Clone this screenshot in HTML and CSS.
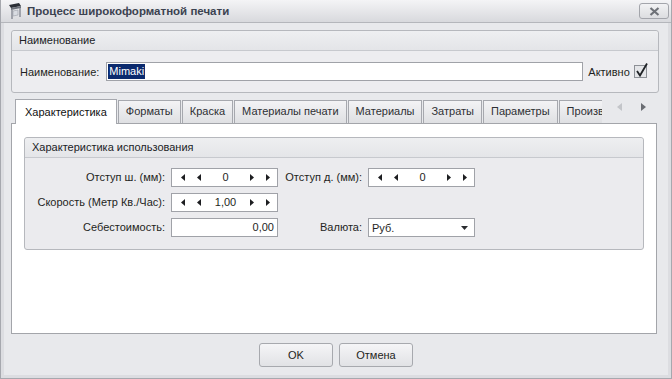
FILE: index.html
```html
<!DOCTYPE html>
<html lang="ru">
<head>
    <meta charset="UTF-8">
    <meta name="viewport" content="width=device-width, initial-scale=1.0">
    <title>Процесс широкоформатной печати</title>
    <link rel="stylesheet" href="styles.css">
</head>
<body>

    <div class="window">
        <div class="titlebar">
            <svg class="title-icon" width="18" height="18" viewBox="0 0 18 18">
                <path d="M3 3 L13 1 L15 4 L5 6 Z" fill="#2b2f36"/>
                <path d="M5 6 L15 4 L15 6 L5 8 Z" fill="#6b7079"/>
                <path d="M6 8 L6 17 M14 6 L14 15" stroke="#8a8f98" stroke-width="1.5"/>
                <path d="M7 9 L12 8 L12 13 L7 14 Z" fill="#d9dce2" stroke="#9aa0a8" stroke-width="0.6"/>
            </svg>
            <span class="title-text">Процесс широкоформатной печати</span>
            <div class="close-btn">
                <svg width="11" height="9" viewBox="0 0 11 9">
                    <path d="M1.5 1 L9.5 8 M9.5 1 L1.5 8" stroke="#6f7278" stroke-width="2.2"/>
                </svg>
            </div>
        </div>

        <div class="content">
            <div class="group name-group">
                <div class="group-head">Наименование</div>
                <div class="name-row">
                    <span class="label">Наименование:</span>
                    <div class="input name-input"><span class="selected">Mimaki</span></div>
                    <span class="label active-label">Активно</span>
                    <svg class="checkbox" width="15" height="16" viewBox="0 0 15 16">
                        <rect x="0.5" y="2.5" width="12" height="12" fill="#e4e5e8" stroke="#8d9096"/>
                        <path d="M3 8 L6 12.5 L13 0.5" fill="none" stroke="#1f2226" stroke-width="1.8"/>
                    </svg>
                </div>
            </div>

            <div class="tab-strip">
                <div class="tab-list">
                    <div class="tab active">Характеристика</div>
                    <div class="tab">Форматы</div>
                    <div class="tab">Краска</div>
                    <div class="tab">Материалы печати</div>
                    <div class="tab">Материалы</div>
                    <div class="tab">Затраты</div>
                    <div class="tab">Параметры</div>
                    <div class="tab">Производство</div>
                </div>
                <div class="tab-nav">
                    <svg width="5" height="8" viewBox="0 0 5 8"><path d="M5 0 L0 4 L5 8 Z" fill="#c3c5c9"/></svg>
                    <svg width="5" height="8" viewBox="0 0 5 8"><path d="M0 0 L5 4 L0 8 Z" fill="#6a6d73"/></svg>
                </div>
            </div>

            <div class="tab-panel">
                <div class="group usage-group">
                    <div class="group-head">Характеристика использования</div>
                    <div class="form-grid">
                        <span class="label">Отступ ш. (мм):</span>
                        <div class="input spin">
                            <svg width="4" height="7" viewBox="0 0 4 7"><path d="M4 0 L0 3.5 L4 7 Z"/></svg>
                            <svg width="4" height="7" viewBox="0 0 4 7"><path d="M4 0 L0 3.5 L4 7 Z"/></svg>
                            <span class="spin-value">0</span>
                            <svg width="4" height="7" viewBox="0 0 4 7"><path d="M0 0 L4 3.5 L0 7 Z"/></svg>
                            <svg width="4" height="7" viewBox="0 0 4 7"><path d="M0 0 L4 3.5 L0 7 Z"/></svg>
                        </div>
                        <span class="label">Отступ д. (мм):</span>
                        <div class="input spin">
                            <svg width="4" height="7" viewBox="0 0 4 7"><path d="M4 0 L0 3.5 L4 7 Z"/></svg>
                            <svg width="4" height="7" viewBox="0 0 4 7"><path d="M4 0 L0 3.5 L4 7 Z"/></svg>
                            <span class="spin-value">0</span>
                            <svg width="4" height="7" viewBox="0 0 4 7"><path d="M0 0 L4 3.5 L0 7 Z"/></svg>
                            <svg width="4" height="7" viewBox="0 0 4 7"><path d="M0 0 L4 3.5 L0 7 Z"/></svg>
                        </div>

                        <span class="label">Скорость (Метр Кв./Час):</span>
                        <div class="input spin">
                            <svg width="4" height="7" viewBox="0 0 4 7"><path d="M4 0 L0 3.5 L4 7 Z"/></svg>
                            <svg width="4" height="7" viewBox="0 0 4 7"><path d="M4 0 L0 3.5 L4 7 Z"/></svg>
                            <span class="spin-value">1,00</span>
                            <svg width="4" height="7" viewBox="0 0 4 7"><path d="M0 0 L4 3.5 L0 7 Z"/></svg>
                            <svg width="4" height="7" viewBox="0 0 4 7"><path d="M0 0 L4 3.5 L0 7 Z"/></svg>
                        </div>
                        <span></span>
                        <span></span>

                        <span class="label">Себестоимость:</span>
                        <div class="input number">0,00</div>
                        <span class="label">Валюта:</span>
                        <div class="input select">
                            <span>Руб.</span>
                            <svg width="7" height="4" viewBox="0 0 7 4"><path d="M0 0 L7 0 L3.5 4 Z" fill="#2a2c30"/></svg>
                        </div>
                    </div>
                </div>
            </div>
        </div>

        <div class="footer">
            <div class="button">OK</div>
            <div class="button">Отмена</div>
        </div>
    </div>

</body>
</html>
```

FILE: styles.css
```css
body {
    margin: 0;
    font-family: 'Liberation Sans', Arial, sans-serif;
    font-size: 11px;
    color: #1e1f22;
    background-color: #e8e9ec;
}
.window {
    width: 672px;
    height: 379px;
    box-sizing: border-box;
    background-color: #e8e9ec;
    border: 1px solid #a6a8ae;
    border-top: none;
    box-shadow: inset 3px 0 0 #dcdde1, inset -3px 0 0 #dcdde1, inset 0 -3px 0 #dcdde1;
    display: flex;
    flex-direction: column;
}
.titlebar {
    height: 22px;
    border-bottom: 1px solid #b4b6bb;
    background: linear-gradient(#f4f4f6, #d8d9dd);
    display: flex;
    align-items: center;
    padding-left: 5px;
    padding-right: 2px;
}
.title-icon {
    margin-right: 3px;
}
.title-text {
    font-size: 11.5px;
    font-weight: bold;
    color: #3b4250;
    flex: 1;
}
.close-btn {
    width: 28px;
    height: 14px;
    border: 1px solid #a3a5ab;
    border-radius: 3px;
    background: linear-gradient(#f2f2f4, #dcdde0);
    display: flex;
    align-items: center;
    justify-content: center;
}
.content {
    padding: 7px 12px 0 10px;
    display: flex;
    flex-direction: column;
}
.group {
    box-sizing: border-box;
    border: 1px solid #b6b8bd;
    border-radius: 3px;
    background-color: #ededf0;
}
.group-head {
    height: 19px;
    line-height: 19px;
    padding-left: 7px;
    border-bottom: 1px solid #c7c9ce;
    background: linear-gradient(#eeeff1, #e4e5e8);
    border-radius: 3px 3px 0 0;
    color: #202226;
}
.name-group {
    height: 63px;
}
.name-row {
    height: 41px;
    display: flex;
    align-items: center;
    padding-left: 8px;
}
.input {
    box-sizing: border-box;
    height: 19px;
    border: 1px solid #a0a2a8;
    background-color: #fff;
}
.name-input {
    width: 477px;
    margin-left: 7px;
    padding: 1px 0 0 1px;
}
.selected {
    display: inline-block;
    background-color: #0b2a6e;
    color: #fff;
    line-height: 15px;
    padding: 0 1px;
}
.active-label {
    margin-left: 5px;
}
.checkbox {
    margin-left: 4px;
    margin-top: -2px;
}
.tab-strip {
    margin-top: 6px;
    height: 24px;
    display: flex;
    align-items: flex-end;
    padding-left: 4px;
}
.tab-list {
    width: 587px;
    height: 25px;
    overflow: hidden;
    display: flex;
    align-items: flex-end;
    margin-bottom: -1px;
}
.tab {
    flex-shrink: 0;
    box-sizing: border-box;
    height: 23px;
    line-height: 21px;
    padding: 0 7px;
    margin-right: 1px;
    border: 1px solid #a6a8ae;
    border-bottom: none;
    background: linear-gradient(#f3f3f5, #dfe0e3);
    color: #2e3034;
    margin-bottom: 1px;
}
.tab.active {
    height: 25px;
    line-height: 25px;
    padding: 0 9px;
    background: #fff;
    margin-bottom: 0;
    position: relative;
    z-index: 1;
    color: #111;
}
.tab-nav {
    flex: 1;
    align-self: flex-start;
    display: flex;
    justify-content: space-around;
    padding: 4px 4px 0 6px;
}
.tab-panel {
    width: 646px;
    height: 211px;
    box-sizing: border-box;
    border: 1px solid #a3a5aa;
    background-color: #fff;
    padding: 13px 0 0 12px;
}
.usage-group {
    width: 620px;
    height: 113px;
    background-color: #ebebee;
}
.form-grid {
    display: grid;
    grid-template-columns: 132px 107px 78px 107px;
    grid-auto-rows: 19px;
    column-gap: 6px;
    row-gap: 6px;
    padding: 10px 0 0 8px;
}
.form-grid .label {
    text-align: right;
    line-height: 19px;
    white-space: nowrap;
}
.spin {
    display: grid;
    grid-template-columns: 16px 16px 1fr 16px 16px;
    align-items: center;
    justify-items: center;
    padding: 0 1px 0 3px;
    fill: #1d1e21;
}
.spin-value {
    line-height: 17px;
}
.number {
    text-align: right;
    line-height: 17px;
    padding-right: 3px;
}
.select {
    display: flex;
    align-items: center;
    justify-content: space-between;
    padding: 0 6px 0 3px;
}
.footer {
    display: flex;
    justify-content: center;
    gap: 6px;
    padding-top: 9px;
}
.button {
    box-sizing: border-box;
    width: 74px;
    height: 24px;
    line-height: 22px;
    text-align: center;
    border: 1px solid #a7a9ae;
    border-radius: 3px;
    background: linear-gradient(#f5f5f7, #e1e2e5);
    color: #1e1f22;
}
```
